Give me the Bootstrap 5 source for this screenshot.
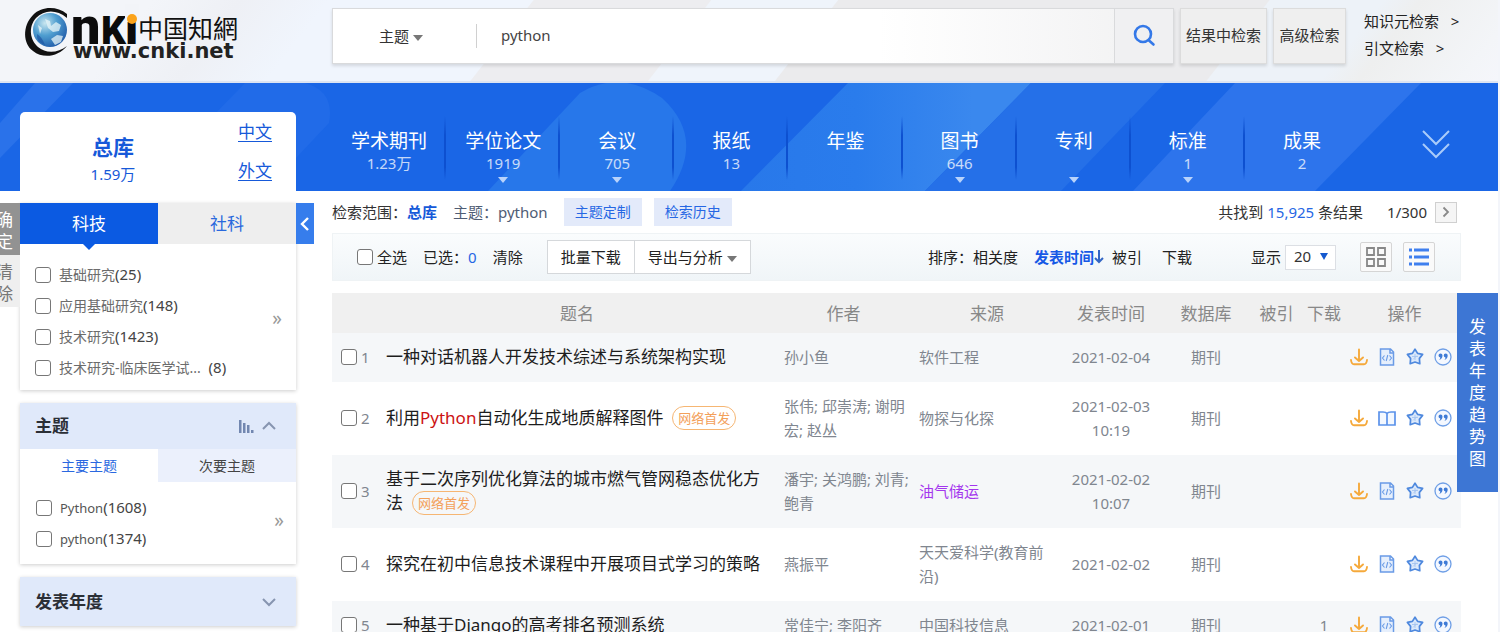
<!DOCTYPE html>
<html lang="zh-CN">
<head>
<meta charset="utf-8">
<meta name="viewport" content="width=device-width, initial-scale=1">
<title>检索 - 中国知网</title>
<link href="https://cdn.jsdelivr.net/npm/bootstrap@5.3.0/dist/css/bootstrap.min.css" rel="stylesheet">
<style>
:root { --kblue: #1a66e6; --ktext: #333; --kgray: #80868f; }
body { font-family: "Noto Sans", "Noto Sans CJK SC", sans-serif; font-size: 15px; line-height: 24px; color: var(--ktext); background: #fff; overflow: hidden; height: 100vh; }
a { text-decoration: none; color: inherit; }
button { font-family: inherit; font-size: inherit; color: inherit; line-height: 24px; }
svg { display: block; flex: none; }
.page-wrap { border-right: 2px solid #f3f5fa; }
.top-head { height: 83px; padding: 8px 0 0 24px; border-bottom: 2px solid #dde4f2;
  background: linear-gradient(128deg, #f3f5f9 0 120px, #eef0f5 190px, #f0f5fd 260px 420px, #ededf0 421px 560px, #eff4fb 561px 660px, #ebebed 661px 1000px, #edf2f8 1001px 1090px, #eeefef 1120px, #f3f5f8 1200px, #f5f6fb); }
.logo-box { width: 308px; }
.logo-box svg { overflow: visible; }
.search-box { height: 56px; background: linear-gradient(90deg, #fff 65%, #f2f2f3 97%); border: 1px solid #d9dadc; box-shadow: 0 2px 3px #0000001f; }
.field-pick { width: 143px; padding-left: 46px; border: 0; background: none; }
.field-line { width: 1px; height: 24px; background: #d0d0d0; }
.kw-input { border: 0; outline: 0; background: none; padding: 0 24px 2px; min-width: 0; color: #444; }
.head-btn { height: 56px; width: 73px; margin-left: 6px; background: #efefef; border: 1px solid #dcdcdc; box-shadow: 0 2px 3px #0000001f; padding: 0 0 3px; font-size: 15px; white-space: nowrap; }
.head-btn.wide-btn { width: 87px; }
.go-btn { width: 59px; height: 54px; border: 0; border-left: 1px solid #d9dadc; background: #f0f0f2; padding-bottom: 3px; }
.side-links { width: 152px; line-height: 27px; padding-left: 18px; color: #222; }
.tri { display: inline-block; border: 5px solid transparent; border-top: 6px solid #777; border-bottom: 0; }
.band { position: relative; height: 108px; background: var(--kblue); padding: 29px 0 0 20px; }
.band-art { position: absolute; inset: 0; width: 100%; height: 100%; }
.total-card { width: 276px; height: 79px; background: #fff; border-radius: 5px 5px 0 0; color: #1659d9; position: relative; flex: none; }
.total-main { width: 186px; padding-top: 20px; }
.total-name { font-size: 21px; font-weight: 700; line-height: 30px; }
.total-langs { font-size: 17px; line-height: 39px; }
.total-langs a { text-decoration: underline; text-underline-offset: 3px; }
.db-nav { position: relative; margin-left: 36px; }
.db-item { flex: 1 1 0; height: 64px; margin-top: 4px; text-align: center; color: #fff; padding-top: 12px; background: linear-gradient(#0d52d000, #0d50d0 30%, #0d50d0 80%, #0d52d000) right / 2px 100% no-repeat; }
.db-item.last-db { background: none; }
.db-name { font-size: 19px; line-height: 26px; }
.db-num { height: 21px; line-height: 19px; opacity: .75; }
.db-item .tri { border-top-color: #b9d3fb; display: block; width: 0; margin: 2px auto 0; }
.more-db { width: 139px; padding: 18px 0 0 15px; background: none; border: 0; }
.sidebar { width: 276px; margin: 12px 0 0 20px; flex: none; }
.panel { background: #fff; box-shadow: 0 1px 4px #00000033; margin-bottom: 13px; position: relative; }
.tab-btn { flex: 1; border: 0; height: 41px; font-size: 17px; background: #eee; color: #2968dd; }
.tab-btn.on { background: #0b5ae2; color: #fff; position: relative; }
.tab-btn.on::after { content: ""; position: absolute; left: 50%; top: 100%; margin-left: -6px; border: 6px solid transparent; border-top-color: #0b5ae2; border-bottom: 0; }
.fold-btn { position: absolute; left: 100%; top: 0; width: 18px; height: 41px; border: 0; background: #367dec; padding: 0 0 0 3px; }
.opt-list { padding: 15px 0 7px 15px; }
.opt-list.compact { padding: 10px 0 10px 16px; }
.opt-row { height: 31px; display: flex; align-items: center; gap: 8px; color: #444; }
.opt-name { font-size: 14px; color: #6c6c6c; }
.opt-small { font-size: 13px; color: #555; }
.k-check { appearance: none; width: 16px; height: 16px; margin: 0; flex: none; border: 1px solid #777; border-radius: 3px; background: #fff; }
.k-check:checked { background: var(--kblue); }
.more-opts { position: absolute; right: 14px; top: 103px; border: 0; background: none; padding: 0; color: #999; font-size: 19px; }
.more-opts.short { top: 105px; right: 12px; }
.panel-head { height: 46px; background: #e0e9fa; padding: 0 20px 0 15px; font-size: 17px; font-weight: 700; color: #2b2f36; }
.panel-head.closed { height: 49px; }
.sub-tab { flex: 1; border: 0; height: 33px; background: #ebf0fc; color: #444; font-size: 14px; }
.sub-tab.on { background: #fff; color: #2a68e0; }
.edge-tools { position: absolute; left: 0; top: 203px; width: 20px; font-size: 17px; line-height: 22px; }
.edge-tools button { display: block; width: 20px; height: 52px; border: 0; padding: 4px 7px 0 0; line-height: 22px; overflow: hidden; background: #efefef; color: #777; word-break: break-all; direction: rtl; }
.edge-tools button:first-child { background: #929292; color: #fff; }
.results { flex: 1; min-width: 0; margin: 7px 37px 0 36px; }
.crumbs { height: 28px; margin-bottom: 7px; }
.pill-btn { border: 0; height: 28px; width: 78px; padding: 0; background: #e3eafa; color: #2667e4; font-size: 14px; }
.pill-btn + .pill-btn { margin-left: 12px; }
.page-next { width: 22px; height: 21px; border: 1px solid #d0d0d0; background: #f5f5f5; padding: 0; display: grid; place-items: center; }
.toolbar { height: 48px; background: linear-gradient(#fafcfd, #f0f5f8); border: 1px solid #eff3f5; padding: 0 25px 0 24px; color: #222; margin-bottom: 12px; }
.plain { border: 0; background: none; padding: 0; }
.sort-last { margin-left: 20px; margin-right: 59px; }
.box-btn { height: 34px; border: 1px solid #d5d8db; background: #fff; padding: 0 13px; }
.box-btn + .box-btn { margin-left: -1px; }
.size-pick { width: 51px; height: 25px; border: 1px solid #dcdfe4; background: #fff; appearance: none; padding: 0 8px 2px; color: #333; border-radius: 0; line-height: 20px; }
.size-wrap { position: relative; }
.size-wrap .tri { position: absolute; right: 8px; top: 9px; border-top: 7px solid #1559cf; border-left-width: 4px; border-right-width: 4px; pointer-events: none; }
.view-btn { width: 32px; height: 30px; border: 1px solid #d5d5d5; background: #fafafa; padding: 0; display: grid; place-items: center; border-radius: 2px; }
.view-btn + .view-btn { margin-left: 11px; }
.res-table { width: 100%; table-layout: fixed; border-collapse: collapse; color: var(--kgray); }
.res-table th { height: 40px; background: #f0f0f0; font-weight: 400; font-size: 17px; text-align: center; color: #888; padding: 2px 0 0; }
.res-table td { padding: 11px 8px 13px; border-top: 1px solid transparent; vertical-align: middle; }
.res-table tbody tr:nth-child(odd) { background: #f5f7f9; }
.res-table td.num-cell { padding-left: 9px; padding-right: 0; }
.res-table td.tight { padding-left: 0; padding-right: 0; text-align: center; }
.res-table td.who { padding-right: 0; }
.res-table td.date-cell { padding-left: 6px; padding-right: 6px; text-align: center; }
.paper { font-size: 17px; color: #1d1d1d; }
.paper em { font-style: normal; color: #cc1212; }
.first-tag { display: inline-block; font-size: 13px; line-height: 22px; height: 24px; border: 1px solid #f6b673; border-radius: 12px; color: #f3a05a; padding: 0 5px; margin-left: 5px; vertical-align: top; }
.ops { gap: 10px; padding-left: 2px; }
.trend-tab { position: absolute; right: 0; top: 293px; width: 41px; height: 199px; border: 0; background: #3d76d4; color: #fff; font-size: 17px; line-height: 22px; padding: 0 12px; }
</style>
</head>
<body>
<svg width="0" height="0" class="position-absolute" aria-hidden="true">
  <symbol id="i-down" viewBox="0 0 18 18"><g fill="none" stroke="#f5a93b" stroke-width="1.900" stroke-linecap="round" stroke-linejoin="round"><path d="M9 1.500V13M5 9.500L9 13l4-3.500M1 12q.5 4.300 3 4.300h10q2.500 0 3-4.300"/></g></symbol>
  <symbol id="i-html" viewBox="0 0 18 18"><g fill="none" stroke="#6a9be6" stroke-width="1.500"><path d="M2.500 1h10l3 3v13h-13zM12 1v4h3.500" fill="#e6effc"/><path d="M6.500 7.500L4.500 10l2 2.500M11.500 7.500l2 2.500-2 2.500M9.800 7l-1.600 6" stroke-width="1.100"/></g></symbol>
  <symbol id="i-book" viewBox="0 0 18 18"><path d="M9 4.500Q8 3 5 3H1v13h16V3h-4Q10 3 9 4.500zM9 4.500V16" fill="#f3f8ff" stroke="#5b92ea" stroke-width="1.700"/></symbol>
  <symbol id="i-star" viewBox="0 0 18 18"><path d="M9 1.200l2.600 4.200 5 1-3.200 4 .4 5.300L9 14l-4.800 1.700.4-5.300-3.200-4 5-1z" fill="#dce9fb" stroke="#4f89de" stroke-width="1.700" stroke-linejoin="round"/><path d="M9 6v6M6 8.500h6M7 11.500l4-4" stroke="#9fc0ef" stroke-width=".8"/></symbol>
  <symbol id="i-quote" viewBox="0 0 18 18"><circle cx="9" cy="9" r="8" fill="#f4f8ff" stroke="#6f9fe6" stroke-width="1.300"/><path d="M4.500 7.500a1.900 1.900 0 1 1 4 0q0 3.300-3.300 4.600 1.200-1.500 1.100-2.700-1.800-.1-1.800-1.900zM9.700 7.500a1.900 1.900 0 1 1 4 0q0 3.300-3.300 4.600 1.200-1.500 1.100-2.700-1.800-.1-1.800-1.900z" fill="#3f7bd6"/></symbol>
</svg>

<div class="page-wrap position-relative">
<header class="top-head d-flex align-items-start">
  <a href="#" class="logo-box" aria-label="中国知网">
    <svg width="216" height="54" viewBox="0 0 216 54">
      <defs><radialGradient id="globe" cx=".35" cy=".3" r=".8"><stop offset="0" stop-color="#c8e6ef"/><stop offset=".45" stop-color="#4f9ed0"/><stop offset="1" stop-color="#1c55a5"/></radialGradient></defs>
      <path d="M43 6C33-2 18-2 9 7-2 18-1 36 9 43c10 8 25 6 34-5-9 7-21 8-29 1C6 32 4 19 12 10 20 2 32 1 43 10z" fill="#111"/>
      <circle cx="26" cy="22" r="17" fill="url(#globe)"/>
      <path d="M21 11l5 2 1 5 5-4 5 3-2 6-6 1-5-4zM27 31l6-4 6 1-2 6-6 3zM14 17l4 3-2 6z" fill="#e8f6f8" opacity=".75"/>
      <path d="M13 26q5 3 8 11-9-3-8-11z" fill="#174f9e" opacity=".6"/>
      <text y="36" font-family="Roboto, sans-serif" font-weight="900" fill="#0b0b0b"><tspan x="47" font-size="52">n</tspan><tspan x="77" font-size="39">K</tspan><tspan x="101" font-size="48">i</tspan></text>
      <rect x="101" y="-4" width="14" height="18" fill="#f2f4f8"/>
      <circle cx="108" cy="11" r="5" fill="#fba31b"/>
      <text x="114" y="30" font-family="'Noto Sans CJK SC', sans-serif" font-size="25" fill="#111">中国知網</text>
      <text x="49" y="50" font-family="'DejaVu Sans', sans-serif" font-size="21" font-weight="700" fill="#222">www.cnki.net</text>
    </svg>
  </a>
  <div class="search-box d-flex align-items-center flex-grow-1">
    <button class="field-pick text-start">主题 <span class="tri align-middle"></span></button>
    <span class="field-line"></span>
    <input class="kw-input flex-grow-1" type="text" value="python" aria-label="检索词">
    <button class="go-btn" aria-label="检索"><svg class="mx-auto" width="24" height="24" viewBox="0 0 24 24" fill="none" stroke="#3478e8" stroke-width="2.600" stroke-linecap="round"><circle cx="11" cy="11" r="8"/><path d="M17 17.500l4.500 4"/></svg></button>
  </div>
  <button class="head-btn wide-btn">结果中检索</button>
  <button class="head-btn">高级检索</button>
  <nav class="side-links"><a class="d-block" href="#">知识元检索 &nbsp; &gt;</a><a class="d-block" href="#">引文检索 &nbsp; &gt;</a></nav>
</header>

<section class="band d-flex">
  <svg class="band-art" viewBox="0 0 1498 108" preserveAspectRatio="none" aria-hidden="true">
    <defs><linearGradient id="g1"><stop offset="0" stop-color="#2878ea"/><stop offset=".4" stop-color="#2a7cec"/><stop offset=".8" stop-color="#3a88ee"/></linearGradient></defs>
    <path d="M35 0h38L0 75V40z" fill="#2a72ea"/>
    <path d="M245 0h60q30 8 24 40l-64 68H140z" fill="#216be8"/>
    <path d="M488 108L580 10q40-24 82 5 44 40 8 93z" fill="#2777ea"/>
    <path d="M741 108L848 0h183L925 108z" fill="url(#g1)"/>
    <path d="M1031 0h134l-104 108H925z" fill="#2570e8"/>
    <path d="M1235 0h186l-106 108h-182z" fill="#2d74ec"/>
  </svg>
  <div class="total-card d-flex">
    <a href="#" class="total-main text-center"><div class="total-name">总库</div><div>1.59万</div></a>
    <div class="total-langs ps-4 ms-2"><a class="d-block" href="#">中文</a><a class="d-block" href="#">外文</a></div>
  </div>
  <nav class="db-nav d-flex flex-grow-1">
    <a href="#" class="db-item"><div class="db-name">学术期刊</div><div class="db-num">1.23万</div></a>
    <a href="#" class="db-item"><div class="db-name">学位论文</div><div class="db-num">1919</div><span class="tri"></span></a>
    <a href="#" class="db-item"><div class="db-name">会议</div><div class="db-num">705</div><span class="tri"></span></a>
    <a href="#" class="db-item"><div class="db-name">报纸</div><div class="db-num">13</div></a>
    <a href="#" class="db-item"><div class="db-name">年鉴</div><div class="db-num"></div></a>
    <a href="#" class="db-item"><div class="db-name">图书</div><div class="db-num">646</div><span class="tri"></span></a>
    <a href="#" class="db-item"><div class="db-name">专利</div><div class="db-num"></div><span class="tri"></span></a>
    <a href="#" class="db-item"><div class="db-name">标准</div><div class="db-num">1</div><span class="tri"></span></a>
    <a href="#" class="db-item last-db"><div class="db-name">成果</div><div class="db-num">2</div></a>
    <button class="more-db d-flex justify-content-center" aria-label="更多"><svg width="28" height="30" viewBox="0 0 28 30" fill="none" stroke="#a9cbfa" stroke-width="2"><path d="M1 1l13 13L27 1M1 14l13 13L27 14"/></svg></button>
  </nav>
</section>

<div class="d-flex">
  <aside class="sidebar">
    <section class="panel">
      <div class="d-flex"><button class="tab-btn on">科技</button><button class="tab-btn">社科</button></div>
      <button class="fold-btn" aria-label="收起"><svg width="12" height="16" viewBox="0 0 12 16" fill="none" stroke="#fff" stroke-width="2.400"><path d="M9 2L3 8l6 6"/></svg></button>
      <div class="opt-list">
        <label class="opt-row"><input type="checkbox" class="k-check"><span><span class="opt-name">基础研究</span>(25)</span></label>
        <label class="opt-row"><input type="checkbox" class="k-check"><span><span class="opt-name">应用基础研究</span>(148)</span></label>
        <label class="opt-row"><input type="checkbox" class="k-check"><span><span class="opt-name">技术研究</span>(1423)</span></label>
        <label class="opt-row"><input type="checkbox" class="k-check"><span><span class="opt-name">技术研究-临床医学试...</span>&nbsp; (8)</span></label>
      </div>
      <button class="more-opts">»</button>
    </section>
    <section class="panel">
      <div class="panel-head d-flex align-items-center">主题
        <svg class="ms-auto" width="15" height="13" viewBox="0 0 15 13" fill="#7287b0"><path d="M0 0h2.500v13H0zM4 3h2.500v10H4zM8 5h2.500v8H8zM12 10h2.500v3H12z"/></svg>
        <svg class="ms-2" width="14" height="12" viewBox="0 0 14 12" fill="none" stroke="#8795b0" stroke-width="2"><path d="M1 9l6-6 6 6"/></svg>
      </div>
      <div class="d-flex"><button class="sub-tab on">主要主题</button><button class="sub-tab">次要主题</button></div>
      <div class="opt-list compact">
        <label class="opt-row"><input type="checkbox" class="k-check"><span><span class="opt-small">Python</span>(1608)</span></label>
        <label class="opt-row"><input type="checkbox" class="k-check"><span><span class="opt-small">python</span>(1374)</span></label>
      </div>
      <button class="more-opts short">»</button>
    </section>
    <section class="panel">
      <div class="panel-head closed d-flex align-items-center justify-content-between">发表年度
        <svg width="14" height="12" viewBox="0 0 14 12" fill="none" stroke="#8795b0" stroke-width="2"><path d="M1 3l6 6 6-6"/></svg>
      </div>
    </section>
  </aside>

  <main class="results">
    <div class="crumbs d-flex align-items-center">
      <span>检索范围：</span><a href="#" class="fw-bold" style="color:#1659d9">总库</a>
      <span class="ms-3" style="color:#4f5d75">主题：python</span>
      <button class="pill-btn ms-3">主题定制</button><button class="pill-btn">检索历史</button>
      <span class="ms-auto">共找到 <span style="color:#2667e4">15,925</span> 条结果</span>
      <span class="ms-4">1/300</span>
      <button class="page-next ms-2 me-1" aria-label="下一页"><svg width="8" height="12" viewBox="0 0 8 12" fill="none" stroke="#888" stroke-width="1.800"><path d="M1.500 1.500L6 6l-4.500 4.500"/></svg></button>
    </div>
    <div class="toolbar d-flex align-items-center">
      <label class="d-flex align-items-center gap-1"><input type="checkbox" class="k-check"><span>全选</span></label>
      <span class="ms-3">已选：<a href="#" style="color:#2667e4">0</a></span>
      <button class="plain ms-3">清除</button>
      <div class="d-flex ms-4"><button class="box-btn">批量下载</button><button class="box-btn">导出与分析 <span class="tri align-middle"></span></button></div>
      <span class="ms-auto">排序：</span><button class="plain">相关度</button>
      <button class="plain d-flex align-items-center ms-3 fw-bold" style="color:#1659e6">发表时间<svg width="10" height="14" viewBox="0 0 10 14" fill="none" stroke="#3266c4" stroke-width="2"><path d="M5 0v12M1 8l4 4 4-4"/></svg></button>
      <button class="plain ms-2">被引</button><button class="plain sort-last">下载</button>
      <label for="psize">显示</label>
      <span class="size-wrap ms-1"><select id="psize" class="size-pick"><option>20</option><option>50</option></select><span class="tri"></span></span>
      <button class="view-btn ms-4" aria-label="缩略图"><svg width="20" height="20" viewBox="0 0 20 20" fill="none" stroke="#888" stroke-width="1.800"><path d="M1 1h7v7H1zM12 1h7v7h-7zM1 12h7v7H1zM12 12h7v7h-7z"/></svg></button>
      <button class="view-btn" aria-label="列表"><svg width="20" height="20" viewBox="0 0 20 20" stroke="#3f7fee" stroke-width="3"><path d="M0 3h3M5 3h15M0 10h3M5 10h15M0 17h3M5 17h15"/></svg></button>
    </div>
    <table class="res-table">
      <colgroup><col style="width:46px"><col><col style="width:135px"><col style="width:152px"><col style="width:96px"><col style="width:94px"><col style="width:47px"><col style="width:48px"><col style="width:113px"></colgroup>
      <thead><tr><th></th><th>题名</th><th>作者</th><th>来源</th><th>发表时间</th><th>数据库</th><th>被引</th><th>下载</th><th>操作</th></tr></thead>
      <tbody>
        <tr><td class="num-cell"><label class="d-flex align-items-center gap-1"><input type="checkbox" class="k-check">1</label></td><td><a class="paper" href="#">一种对话机器人开发技术综述与系统架构实现</a></td><td class="who">孙小鱼</td><td>软件工程</td><td class="date-cell">2021-02-04</td><td class="tight">期刊</td><td></td><td></td><td class="tight"><div class="ops d-flex"><svg width="18" height="18"><use href="#i-down"/></svg><svg width="18" height="18"><use href="#i-html"/></svg><svg width="18" height="18"><use href="#i-star"/></svg><svg width="18" height="18"><use href="#i-quote"/></svg></div></td></tr>
        <tr><td class="num-cell"><label class="d-flex align-items-center gap-1"><input type="checkbox" class="k-check">2</label></td><td><a class="paper" href="#">利用<em>Python</em>自动化生成地质解释图件</a> <span class="first-tag">网络首发</span></td><td class="who">张伟; 邱崇涛; 谢明宏; 赵丛</td><td>物探与化探</td><td class="date-cell">2021-02-03 10:19</td><td class="tight">期刊</td><td></td><td></td><td class="tight"><div class="ops d-flex"><svg width="18" height="18"><use href="#i-down"/></svg><svg width="18" height="18"><use href="#i-book"/></svg><svg width="18" height="18"><use href="#i-star"/></svg><svg width="18" height="18"><use href="#i-quote"/></svg></div></td></tr>
        <tr><td class="num-cell"><label class="d-flex align-items-center gap-1"><input type="checkbox" class="k-check">3</label></td><td><a class="paper" href="#">基于二次序列优化算法的城市燃气管网稳态优化方法</a> <span class="first-tag">网络首发</span></td><td class="who">潘宇; 关鸿鹏; 刘青; 鲍青</td><td><a href="#" style="color:#a436ee">油气储运</a></td><td class="date-cell">2021-02-02 10:07</td><td class="tight">期刊</td><td></td><td></td><td class="tight"><div class="ops d-flex"><svg width="18" height="18"><use href="#i-down"/></svg><svg width="18" height="18"><use href="#i-html"/></svg><svg width="18" height="18"><use href="#i-star"/></svg><svg width="18" height="18"><use href="#i-quote"/></svg></div></td></tr>
        <tr><td class="num-cell"><label class="d-flex align-items-center gap-1"><input type="checkbox" class="k-check">4</label></td><td><a class="paper" href="#">探究在初中信息技术课程中开展项目式学习的策略</a></td><td class="who">燕振平</td><td>天天爱科学(教育前沿)</td><td class="date-cell">2021-02-02</td><td class="tight">期刊</td><td></td><td></td><td class="tight"><div class="ops d-flex"><svg width="18" height="18"><use href="#i-down"/></svg><svg width="18" height="18"><use href="#i-html"/></svg><svg width="18" height="18"><use href="#i-star"/></svg><svg width="18" height="18"><use href="#i-quote"/></svg></div></td></tr>
        <tr><td class="num-cell"><label class="d-flex align-items-center gap-1"><input type="checkbox" class="k-check">5</label></td><td><a class="paper" href="#">一种基于Django的高考排名预测系统</a></td><td class="who">常佳宁; 李阳齐</td><td>中国科技信息</td><td class="date-cell">2021-02-01</td><td class="tight">期刊</td><td></td><td class="tight">1</td><td class="tight"><div class="ops d-flex"><svg width="18" height="18"><use href="#i-down"/></svg><svg width="18" height="18"><use href="#i-html"/></svg><svg width="18" height="18"><use href="#i-star"/></svg><svg width="18" height="18"><use href="#i-quote"/></svg></div></td></tr>
      </tbody>
    </table>
  </main>
</div>

<div class="edge-tools"><button>确定</button><button>清除</button></div>
<button class="trend-tab">发表年度趋势图</button>
</div>
<script src="https://cdn.jsdelivr.net/npm/bootstrap@5.3.0/dist/js/bootstrap.bundle.min.js"></script>
</body>
</html>
